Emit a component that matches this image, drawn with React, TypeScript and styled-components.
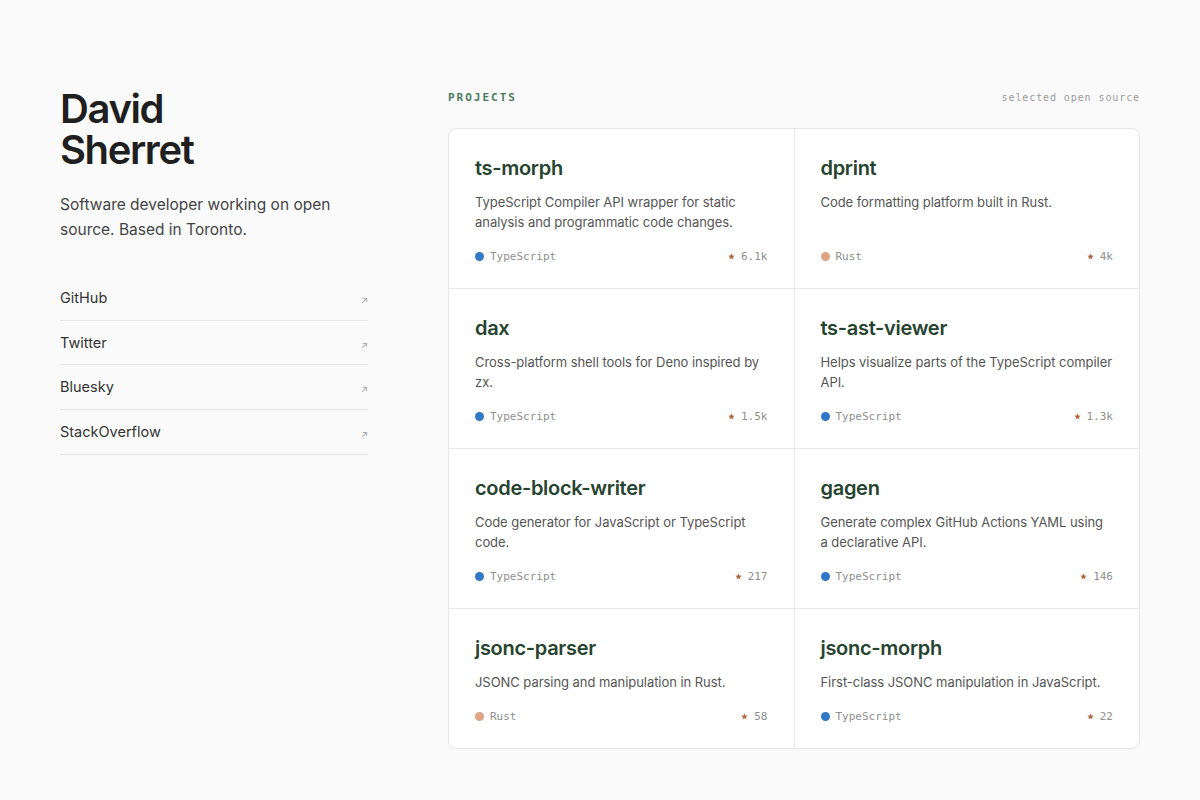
import styled, { createGlobalStyle } from "styled-components";

const GlobalStyle = createGlobalStyle`
  body {
    margin: 0;
    background: #fafafa;
    font-family: Inter, "Noto Sans", sans-serif;
    color: #222;
  }
`;

const Page = styled.div`
  display: grid;
  grid-template-columns: 308px 1fr;
  column-gap: 80px;
  width: 1080px;
  margin: 0 auto;
  padding: 88px 0 52px;
`;

const Aside = styled.aside`
  display: flex;
  flex-direction: column;
`;

const Name = styled.h1`
  margin: 0;
  font-size: 40px;
  line-height: 41px;
  font-weight: 600;
  letter-spacing: -1.4px;
  color: #1f1f1f;
`;

const Bio = styled.p`
  margin: 22px 0 0;
  font-size: 15.5px;
  line-height: 25px;
  color: #444;
`;

const Links = styled.ul`
  list-style: none;
  margin: 34px 0 0;
  padding: 0;
`;

const LinkRow = styled.li`
  display: flex;
  justify-content: space-between;
  align-items: center;
  padding: 12px 0;
  line-height: 19.7px;
  border-bottom: 1px solid #e6e6e6;
  font-size: 14.5px;
  color: #333;
`;

const Arrow = styled.span`
  font-size: 9px;
  line-height: 10px;
  color: #9a9a9a;
  transform: translateY(2px);
`;

const Main = styled.main`
  display: flex;
  flex-direction: column;
`;

const Header = styled.div`
  display: flex;
  justify-content: space-between;
  align-items: center;
  height: 16px;
  margin: 1px 0 23px;
  font-family: "DejaVu Sans Mono", monospace;
`;

const Label = styled.span`
  font-size: 11px;
  font-weight: 700;
  letter-spacing: 2px;
  color: #4a7a5e;
`;

const Note = styled.span`
  font-size: 10px;
  letter-spacing: 0.9px;
  color: #9a9a9a;
`;

const Grid = styled.div`
  display: grid;
  grid-template-columns: 1fr 1fr;
  gap: 1px;
  background: #e8e8e8;
  border: 1px solid #e6e6e6;
  border-radius: 8px;
  overflow: hidden;
`;

const Card = styled.div`
  display: flex;
  flex-direction: column;
  background: #fff;
  padding: 25px 26px 24px;
`;

const Title = styled.h2`
  margin: 0;
  font-size: 20px;
  line-height: 28px;
  font-weight: 600;
  letter-spacing: -0.3px;
  color: #26432f;
`;

const Desc = styled.p`
  margin: 10px -0.5px 0 0;
  font-size: 13px;
  line-height: 20px;
  letter-spacing: -0.05px;
  color: #555;
  flex: 1;
`;

const Meta = styled.div`
  display: flex;
  justify-content: space-between;
  align-items: center;
  margin-top: 16px;
  height: 16px;
  font-family: "DejaVu Sans Mono", monospace;
  font-size: 11px;
  color: #8e8e8e;
`;

const Lang = styled.span`
  display: flex;
  align-items: center;
  gap: 6px;
`;

const Dot = styled.span<{ $color: string }>`
  width: 9px;
  height: 9px;
  border-radius: 50%;
  background: ${(p) => p.$color};
`;

const Stars = styled.span`
  display: flex;
  align-items: center;
  gap: 6px;
`;

const StarIcon = () => (
  <svg width="7" height="7" viewBox="0 0 24 24" fill="#b8643f">
    <path d="M12 1.5l3.1 7 7.6.7-5.8 5 1.8 7.5L12 17.8l-6.7 3.9 1.8-7.5-5.8-5 7.6-.7z" />
  </svg>
);

const langColors: Record<string, string> = {
  TypeScript: "#3178c6",
  Rust: "#dea584",
};

const links = ["GitHub", "Twitter", "Bluesky", "StackOverflow"];

const projects = [
  { name: "ts-morph", desc: "TypeScript Compiler API wrapper for static analysis and programmatic code changes.", lang: "TypeScript", stars: "6.1k" },
  { name: "dprint", desc: "Code formatting platform built in Rust.", lang: "Rust", stars: "4k" },
  { name: "dax", desc: "Cross-platform shell tools for Deno inspired by zx.", lang: "TypeScript", stars: "1.5k" },
  { name: "ts-ast-viewer", desc: "Helps visualize parts of the TypeScript compiler API.", lang: "TypeScript", stars: "1.3k" },
  { name: "code-block-writer", desc: "Code generator for JavaScript or TypeScript code.", lang: "TypeScript", stars: "217" },
  { name: "gagen", desc: "Generate complex GitHub Actions YAML using a declarative API.", lang: "TypeScript", stars: "146" },
  { name: "jsonc-parser", desc: "JSONC parsing and manipulation in Rust.", lang: "Rust", stars: "58" },
  { name: "jsonc-morph", desc: "First-class JSONC manipulation in JavaScript.", lang: "TypeScript", stars: "22" },
];

function App() {
  return (
    <>
      <GlobalStyle />
      <Page>
        <Aside>
          <Name>
            David
            <br />
            Sherret
          </Name>
          <Bio>Software developer working on open source. Based in Toronto.</Bio>
          <Links>
            {links.map((l) => (
              <LinkRow key={l}>
                {l}
                <Arrow>↗</Arrow>
              </LinkRow>
            ))}
          </Links>
        </Aside>
        <Main>
          <Header>
            <Label>PROJECTS</Label>
            <Note>selected open source</Note>
          </Header>
          <Grid>
            {projects.map((p) => (
              <Card key={p.name}>
                <Title>{p.name}</Title>
                <Desc>{p.desc}</Desc>
                <Meta>
                  <Lang>
                    <Dot $color={langColors[p.lang]} />
                    {p.lang}
                  </Lang>
                  <Stars>
                    <StarIcon />
                    {p.stars}
                  </Stars>
                </Meta>
              </Card>
            ))}
          </Grid>
        </Main>
      </Page>
    </>
  );
}

export default App;
